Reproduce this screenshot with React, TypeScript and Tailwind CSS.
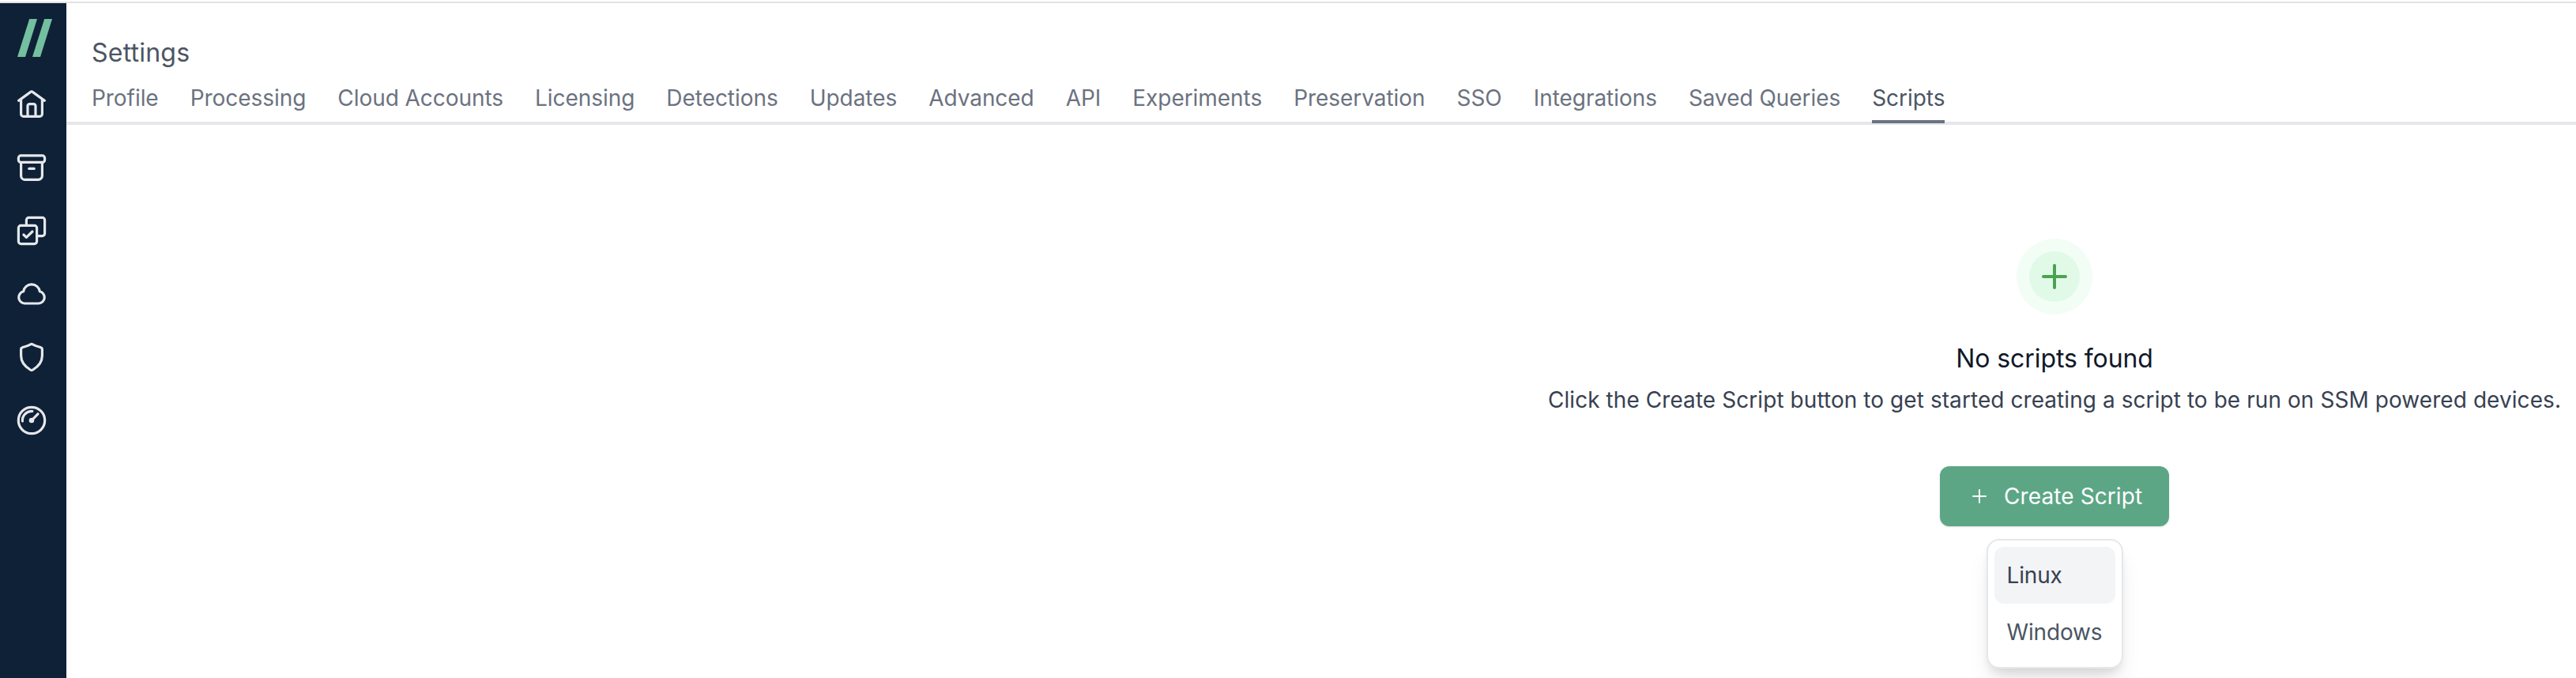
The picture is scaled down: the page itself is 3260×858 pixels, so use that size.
import type { ReactNode } from "react";

const tabs = [
  "Profile", "Processing", "Cloud Accounts", "Licensing", "Detections", "Updates", "Advanced",
  "API", "Experiments", "Preservation", "SSO", "Integrations", "Saved Queries", "Scripts",
];

function Icon({ children }: { children: ReactNode }) {
  return (
    <svg viewBox="0 0 40 40" className="size-10" fill="none" stroke="currentColor" strokeWidth="3.2" strokeLinecap="round" strokeLinejoin="round">
      {children}
    </svg>
  );
}

function Sidebar() {
  return (
    <aside className="flex w-[84px] shrink-0 flex-col bg-[#0f2137] pt-5 text-[#e5e7eb]">
      <svg viewBox="0 0 44 48" className="ml-[22px] h-12 w-11" fill="#74bfa0">
        <path d="M15.2 0H25L10 48H0Z" />
        <path d="M34.2 0H44L29 48H19Z" />
      </svg>
      <nav className="mt-10 ml-5 flex flex-col gap-10">
        <Icon>
          <path d="M3.6 15.4 18.4 4.6a2.6 2.6 0 0 1 3.2 0L36.4 15.4" />
          <path d="M6.6 14V32.2a3.2 3.2 0 0 0 3.2 3.2H30.2a3.2 3.2 0 0 0 3.2-3.2V14" />
          <path d="M15 35V22a2.4 2.4 0 0 1 2.4-2.4h5.2A2.4 2.4 0 0 1 25 22V35" />
        </Icon>
        <Icon>
          <rect x="3.4" y="4.9" width="33.2" height="8.5" rx="3" />
          <path d="M6.6 14V30.4a5 5 0 0 0 5 5H28.4a5 5 0 0 0 5-5V14" />
          <path d="M16.8 21.4H23.2" />
        </Icon>
        <Icon>
          <rect x="3.4" y="13.4" width="23.2" height="23.2" rx="3" />
          <path d="M13.4 13V6.4a3 3 0 0 1 3-3H33.6a3 3 0 0 1 3 3V23.6a3 3 0 0 1-3 3H27" />
          <path d="M9.9 25 13.4 28.3 21 21" />
        </Icon>
        <Icon>
          <path d="M11.2 32H28.8a7.7 7.7 0 0 0 1.5-15.2A10.4 10.4 0 0 0 9.7 16.8a7.7 7.7 0 0 0 1.5 15.2Z" />
        </Icon>
        <Icon>
          <path d="M18.6 3.8a3 3 0 0 1 2.8 0C24.6 5.5 27.8 6.6 31.2 7.5a3 3 0 0 1 2.2 2.9V18C33.4 25.6 28.8 31.6 21.6 36a3 3 0 0 1-3.2 0C11.2 31.6 6.6 25.6 6.6 18V10.4a3 3 0 0 1 2.2-2.9C12.2 6.6 15.4 5.5 18.6 3.8Z" />
        </Icon>
        <Icon>
          <circle cx="20" cy="20" r="16.7" />
          <path d="M8.4 21A11.8 11.8 0 0 1 20.8 8.3" />
          <path d="M20 20 28 11.8" />
          <circle cx="20" cy="20" r="3.3" fill="currentColor" stroke="none" />
        </Icon>
      </nav>
    </aside>
  );
}

function Header() {
  return (
    <header className="flex flex-col border-b-4 border-gray-200 pl-8 text-[#6b7280]">
      <h1 className="mt-[39px] text-[32px] leading-[48px] tracking-[0.22px] text-[#4b5563]">Settings</h1>
      <nav className="-mb-0.5 mt-[13px] flex gap-10 text-[28px] leading-10 tracking-[-0.05px]">
        {tabs.map((tab) => (
          <a key={tab} className={tab === "Scripts" ? "whitespace-nowrap border-b-4 border-[#6b7280] pb-2 text-[#4b5563]" : "whitespace-nowrap pb-3"}>
            {tab}
          </a>
        ))}
      </nav>
    </header>
  );
}

function EmptyState() {
  return (
    <section className="flex w-[1320px] flex-col items-center self-end pt-36">
      <div className="flex size-24 items-center justify-center rounded-full bg-[#f2fdf5]">
        <div className="flex size-16 items-center justify-center rounded-full bg-[#e1fae8]">
          <svg viewBox="0 0 32 32" className="size-8" stroke="#4ba254" strokeWidth="4" strokeLinecap="round">
            <path d="M2 16H30M16 2V30" />
          </svg>
        </div>
      </div>
      <h2 className="mt-8 text-[32px] leading-[48px] tracking-[-0.08px] text-[#111827]">No scripts found</h2>
      <p className="mt-2 whitespace-nowrap text-[28px] leading-10 tracking-[0.068px] text-[#374151]">
        Click the Create Script button to get started creating a script to be run on SSM powered devices.
      </p>
      <button className="mt-16 flex h-[76px] w-[290px] items-center rounded-xl bg-[#5ca686] pl-[41px] text-[28px] text-white shadow-sm">
        <svg viewBox="0 0 18 18" className="size-[18px]" stroke="currentColor" strokeWidth="2" strokeLinecap="round">
          <path d="M1 9H17M9 1V17" />
        </svg>
        <span className="ml-[22px] whitespace-nowrap tracking-[0.1px]">Create Script</span>
      </button>
      <div className="mt-4 flex w-[173px] flex-col rounded-2xl border-2 border-gray-200 bg-white p-2 text-[28px] leading-10 tracking-[-0.15px] shadow-[0_20px_30px_-6px_rgba(0,0,0,0.1),0_8px_12px_-4px_rgba(0,0,0,0.1)]">
        <div className="rounded-xl bg-gray-100 px-4 py-4 text-[#374151]">Linux</div>
        <div className="px-4 py-4 text-[#4b5563]">Windows</div>
      </div>
    </section>
  );
}

export default function App() {
  return (
    <div className="flex h-[858px] w-[3260px] flex-col overflow-hidden bg-white pt-0.5 font-['Inter',sans-serif]">
      <div className="h-0.5 shrink-0 bg-[#e2e2e2]" />
      <div className="flex min-h-0 flex-1">
        <Sidebar />
        <main className="flex min-w-0 flex-1 flex-col">
          <Header />
          <EmptyState />
        </main>
      </div>
    </div>
  );
}
